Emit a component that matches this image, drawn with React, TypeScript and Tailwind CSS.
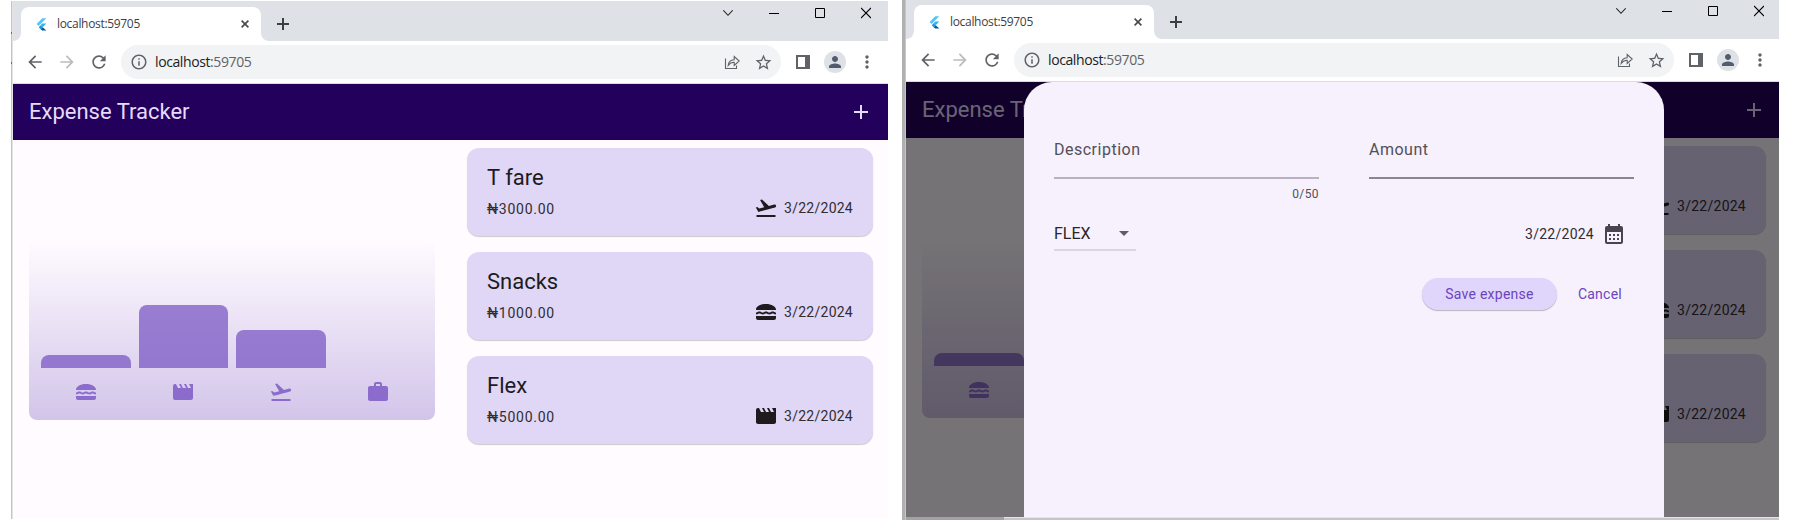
import React from "react";
import {
  MdLunchDining, MdMovie, MdFlightTakeoff, MdWork, MdAdd, MdArrowBack, MdArrowForward,
  MdRefresh, MdInfoOutline, MdStarBorder, MdMoreVert, MdPerson, MdCalendarMonth, MdArrowDropDown,
} from "react-icons/md";

const expenses = [
  { title: "T fare", amount: "₦3000.00", date: "3/22/2024", Icon: MdFlightTakeoff },
  { title: "Snacks", amount: "₦1000.00", date: "3/22/2024", Icon: MdLunchDining },
  { title: "Flex", amount: "₦5000.00", date: "3/22/2024", Icon: MdMovie },
];

const buckets = [
  { height: 12.5, Icon: MdLunchDining },
  { height: 62.5, Icon: MdMovie },
  { height: 37.5, Icon: MdFlightTakeoff },
  { height: 0, Icon: MdWork },
];

function FlutterLogo() {
  return (
    <svg width="16" height="16" viewBox="0 0 16 16">
      <path d="M9.3 2.2h4L5.6 9.9l-2-2z" fill="#54c5f8" />
      <path d="M9.3 7.6h4l-3.6 3.6-2-2z" fill="#29b6f6" />
      <path d="M7.7 9.2l2 2-2 2-2-2z" fill="#1e96e8" />
      <path d="M7.7 13.2l2-2 3.6 3.2h-4z" fill="#01579b" />
    </svg>
  );
}

function TabStrip() {
  return (
    <div className="flex h-10 shrink-0 items-end bg-[#dee1e6]">
      <div className="h-2 w-2 bg-white"><div className="h-2 w-2 rounded-br-lg bg-[#dee1e6]" /></div>
      <div className="flex h-[34px] w-60 items-center rounded-t-lg bg-white pl-3 pr-[11px]">
        <FlutterLogo />
        <span className="ml-2 grow text-xs tracking-[-0.32px] text-[#3c4043]">localhost:59705</span>
        <svg width="10" height="10" viewBox="0 0 10 10" stroke="#45484c" strokeWidth="1.6">
          <path d="M1.6 1.6l6.8 6.8M8.4 1.6l-6.8 6.8" />
        </svg>
      </div>
      <div className="h-2 w-2 bg-white"><div className="h-2 w-2 rounded-bl-lg bg-[#dee1e6]" /></div>
      <svg className="mb-[10px] ml-[7px]" width="14" height="14" viewBox="0 0 14 14" stroke="#3c4043" strokeWidth="2">
        <path d="M7 1v12M1 7h12" />
      </svg>
      <div className="mb-[22px] ml-auto mr-[17px] flex items-center gap-9">
        <svg width="10" height="12" viewBox="0 0 10 12" fill="none" stroke="#222" strokeWidth="1.1"><path d="M.3 3.3L5 8.3l4.7-5" /></svg>
        <svg width="10" height="12" viewBox="0 0 10 12"><path d="M0 6h10v1H0z" /></svg>
        <svg width="10" height="12" viewBox="0 0 10 12" fill="none" stroke="#000"><path d="M.5 1.5h9v9h-9z" /></svg>
        <svg width="10" height="12" viewBox="0 0 10 12" stroke="#000" strokeWidth="1.1"><path d="M0 1l10 10M10 1L0 11" /></svg>
      </div>
    </div>
  );
}

function Toolbar() {
  return (
    <div className="flex h-[43px] shrink-0 items-center border-b border-[#dadce0] bg-white pl-3">
      <div className="flex shrink-0 gap-3 text-[#5f6368]">
        <MdArrowBack size={20} />
        <MdArrowForward size={20} className="text-[#babcbe]" />
        <MdRefresh size={20} />
      </div>
      <div className="ml-3 flex h-[34px] w-[660px] shrink-0 items-center rounded-full bg-[#f1f3f4] pl-[9px] pr-2 text-[#5f6368]">
        <MdInfoOutline size={18} />
        <span className="ml-[7px] grow text-sm tracking-[-0.4px] text-[#5f6368]">
          <span className="text-[#202124]">localhost</span>:59705
        </span>
        <svg className="mr-[14px]" width="16" height="16" viewBox="0 0 16 16" fill="none" stroke="#5f6368" strokeWidth="1.1">
          <path d="M1.500 4.500v10h11v-3M4.200 11.500c.3-4 2.500-5.500 6-5.700V2.500l5 4.500-5 4.500V8.300c-2.700 0-4.500 1-6 3.200z" />
        </svg>
        <MdStarBorder size={19} />
      </div>
      <svg className="ml-[15px] shrink-0" width="14" height="14" viewBox="0 0 14 14"><path fill="#5f6368" fillRule="evenodd" d="M0 0h14v14H0zM2 2v10h7V2z" /></svg>
      <div className="ml-[14px] flex size-[22px] shrink-0 items-center justify-center rounded-full bg-[#dee1e6] text-[#525c6e]">
        <MdPerson size={18} />
      </div>
      <MdMoreVert size={20} className="ml-[11px] shrink-0 text-[#5f6368]" />
    </div>
  );
}

function Chart() {
  return (
    <div className="flex h-[180px] w-[406px] items-end rounded-lg bg-linear-to-t from-[#6a45b8]/30 to-[#6a45b8]/0 px-2 pb-4">
      {buckets.map(({ height, Icon }, i) => (
        <div key={i} className="flex flex-1 flex-col items-center gap-3 px-1">
          <div className="w-full rounded-t-lg bg-[#7450c2]/70" style={{ height }} />
          <Icon size={24} className="text-[#8b6ccd]" />
        </div>
      ))}
    </div>
  );
}

function ExpenseCard({ title, amount, date, Icon }: (typeof expenses)[number]) {
  return (
    <div className="flex h-[88px] flex-col gap-1 rounded-xl bg-[#e0d6f6] px-5 py-4 text-[#1d1b1e] shadow-[0_1px_1px_rgba(0,0,0,0.2)]">
      <div className="text-[22px] leading-7">{title}</div>
      <div className="flex h-6 items-center text-sm">
        <span className="grow pt-[2px] tracking-[0.75px] text-[#302d33]">{amount}</span>
        <Icon size={24} />
        <span className="ml-[6px] tracking-[0.25px] text-[#302d33]">{date}</span>
      </div>
    </div>
  );
}

function ExpenseSheet() {
  return (
    <div className="absolute bottom-0 left-[118px] top-0 flex w-[640px] flex-col rounded-t-[28px] bg-[#f6f1fc] px-[30px] pt-12 text-[#1d1b1e]">
      <div className="flex gap-[50px] text-base tracking-[0.5px] text-[#534f59]">
        <div className="w-[265px]">
          <div className="h-[49px] border-b-2 border-[#b9b1c1] pt-2">Description</div>
          <div className="mt-[7px] text-right text-xs leading-4 tracking-[0.4px]">0/50</div>
        </div>
        <div className="w-[265px]">
          <div className="h-[49px] border-b-2 border-[#8c848f] pt-2">Amount</div>
        </div>
      </div>
      <div className="mt-[14px] flex justify-between">
        <div className="flex h-[35px] w-[82px] items-center justify-between border-b-2 border-[#dad6df]">
          <span className="pt-[2px] text-base text-[#29272c]">FLEX</span>
          <MdArrowDropDown size={24} className="text-[#5f5c63]" />
        </div>
        <div className="flex h-[35px] items-center gap-2 pr-2">
          <span className="text-sm tracking-[0.25px] text-[#302d33]">{"3/22/2024"}</span>
          <MdCalendarMonth size={24} className="text-[#49454e]" />
        </div>
      </div>
      <div className="mt-[27px] flex items-center justify-end text-sm tracking-[0.25px] text-[#6b45be]">
        <div className="flex h-8 w-[135px] items-center justify-center rounded-full bg-[#e0d5fa] shadow-[0_1px_1px_rgba(0,0,0,0.25)]">Save expense</div>
        <div className="w-[77px] pr-3 text-right">Cancel</div>
      </div>
    </div>
  );
}

function BrowserWindow({ sheet = false }: { sheet?: boolean }) {
  return (
    <div className="flex w-[875px] flex-col font-['Open_Sans',sans-serif]">
      <TabStrip />
      <Toolbar />
      <div className="relative h-[435px] shrink-0 bg-[#fffbff] font-[Roboto,sans-serif]">
        <div className="flex h-14 items-center justify-between bg-[#23005c] pl-4 pr-[15px] text-[#e5dbfa]">
          <span className="text-[22px] leading-7">Expense Tracker</span>
          <MdAdd size={24} />
        </div>
        <div className="flex h-[379px]">
          <div className="flex w-[438px] shrink-0 items-center pl-4"><Chart /></div>
          <div className="flex w-[437px] shrink-0 flex-col gap-4 py-2 pl-4 pr-[15px]">
            {expenses.map((e) => <ExpenseCard key={e.title} {...e} />)}
          </div>
        </div>
        {sheet && <div className="absolute inset-0 bg-black/54" />}
        {sheet && <ExpenseSheet />}
      </div>
    </div>
  );
}

export default function App() {
  return (
    <div className="flex h-[520px] w-[1794px] overflow-hidden bg-white">
      <div className="flex w-[13px] shrink-0 justify-end pt-px">
        <div className="flex h-[518px] w-px flex-col bg-[#c4c4c4] pt-[31px]">
          <div className="h-[2px] bg-[#6b6b6b]" />
          <div className="mt-7 h-[2px] bg-[#6b6b6b]" />
        </div>
        <div className="h-[518px] w-px bg-[#e4e4e4]" />
      </div>
      <div className="h-[519px] w-[875px] shrink-0 overflow-hidden pt-px"><BrowserWindow /></div>
      <div className="ml-[14px] w-[3px] shrink-0 bg-[#b0b0b0]" />
      <div className="w-px shrink-0 bg-[#c6c6c6]" />
      <div className="flex w-[873px] shrink-0 flex-col overflow-hidden">
        <div className="-mt-px shrink-0"><BrowserWindow sheet /></div>
        <div className="flex h-[3px] shrink-0">
          <div className="w-[98px] bg-[#a3a3a3]" />
          <div className="grow border-t border-[#e6e2e8] bg-[#c6c4c6]" />
        </div>
      </div>
    </div>
  );
}
